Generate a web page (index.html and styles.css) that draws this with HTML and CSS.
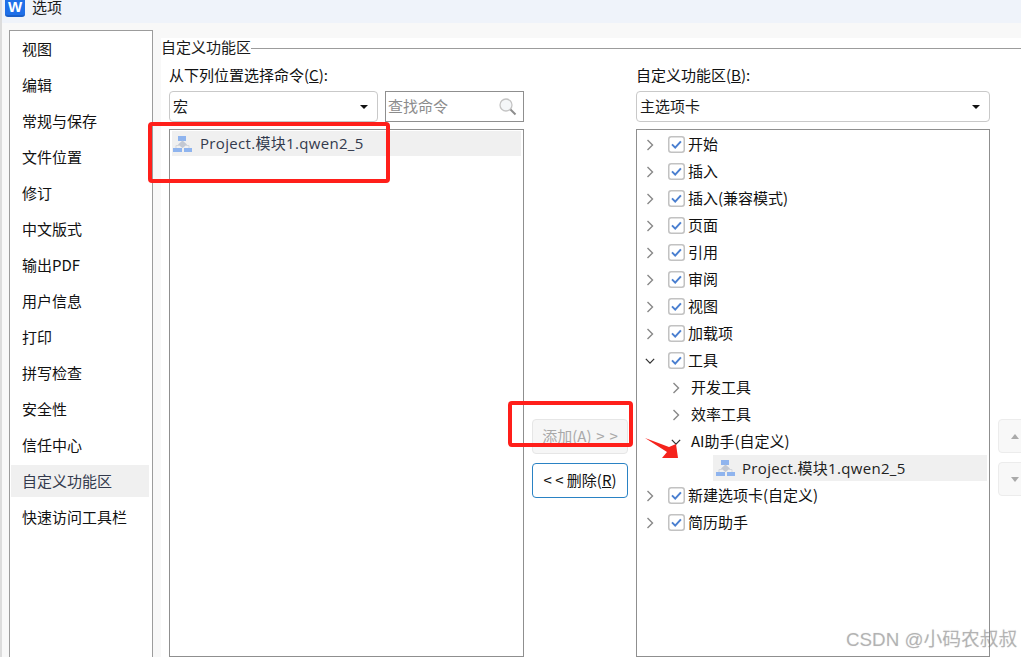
FILE: index.html
```html
<!DOCTYPE html>
<html lang="zh">
<head>
<meta charset="utf-8">
<title>选项</title>
<link rel="stylesheet" href="styles.css">
</head>
<body>
<svg width="0" height="0" class="defs">
  <symbol id="macro" viewBox="0 0 20 16">
    <rect x="5" y="0" width="8" height="5" fill="#8fb4ee"/>
    <rect x="0" y="12" width="9" height="4" fill="#8fb4ee"/>
    <rect x="11" y="12" width="8" height="4" fill="#8fb4ee"/>
    <path d="M9.5 4.5 14 8.5 9.5 12 5 8.5Z" fill="#c3c8d2"/>
    <path d="M3 12V9.5H6M16 12V9.5H13" fill="none" stroke="#d3d6dc" stroke-width="1"/>
  </symbol>
  <symbol id="check" viewBox="0 0 17 17">
    <rect x=".75" y=".75" width="15.5" height="15.5" rx="2.5" fill="#fff" stroke="#c2c2c2" stroke-width="1.5"/>
    <path d="M4 8.4 7.2 11.6 12.9 5.4" fill="none" stroke="#4a7fd0" stroke-width="2"/>
  </symbol>
  <symbol id="right" viewBox="0 0 10 12">
    <path d="M2.5 1 7.5 6 2.5 11" fill="none" stroke="#888" stroke-width="1.4"/>
  </symbol>
  <symbol id="down" viewBox="0 0 12 10">
    <path d="M1 2.5 6 7.5 11 2.5" fill="none" stroke="#333" stroke-width="1.5"/>
  </symbol>
</svg>

<header class="titlebar">
  <span class="app-logo">W</span>
  <span class="app-title">选项</span>
</header>

<div class="dialog">
  <nav class="sidebar">
    <div class="nav-item">视图</div>
    <div class="nav-item">编辑</div>
    <div class="nav-item">常规与保存</div>
    <div class="nav-item">文件位置</div>
    <div class="nav-item">修订</div>
    <div class="nav-item">中文版式</div>
    <div class="nav-item">输出PDF</div>
    <div class="nav-item">用户信息</div>
    <div class="nav-item">打印</div>
    <div class="nav-item">拼写检查</div>
    <div class="nav-item">安全性</div>
    <div class="nav-item">信任中心</div>
    <div class="nav-item selected">自定义功能区</div>
    <div class="nav-item">快速访问工具栏</div>
  </nav>

  <main class="panel">
    <div class="group-title"><span>自定义功能区</span><i class="rule"></i></div>
    <div class="columns">
      <section class="col col-left">
        <div class="field-label">从下列位置选择命令(<u>C</u>):</div>
        <div class="control-row">
          <div class="select select-left"><span>宏</span><i class="caret"></i></div>
          <div class="search"><span>查找命令</span>
            <svg class="search-icon" viewBox="0 0 18 18" width="18" height="18"><circle cx="7" cy="7" r="6" fill="#f4f6f8" stroke="#c4c4c4" stroke-width="1.3"/><path d="M11.5 11.5 16.5 16.5" stroke="#8d8d8d" stroke-width="2"/></svg>
          </div>
        </div>
        <div class="listbox">
          <div class="list-row"><svg class="macro-icon"><use href="#macro"/></svg><span class="latin">Project.模块1.qwen2_5</span></div>
        </div>
      </section>

      <section class="col-mid">
        <button class="btn disabled">添加(<u>A</u>) &gt; &gt;</button>
        <button class="btn primary">&lt; &lt; 删除(<u>R</u>)</button>
      </section>

      <section class="col col-right">
        <div class="field-label">自定义功能区(<u>B</u>):</div>
        <div class="control-row">
          <div class="select select-right"><span>主选项卡</span><i class="caret"></i></div>
        </div>
        <div class="listbox tree">
          <div class="tree-row"><svg class="chev"><use href="#right"/></svg><svg class="check"><use href="#check"/></svg><span>开始</span></div>
          <div class="tree-row"><svg class="chev"><use href="#right"/></svg><svg class="check"><use href="#check"/></svg><span>插入</span></div>
          <div class="tree-row"><svg class="chev"><use href="#right"/></svg><svg class="check"><use href="#check"/></svg><span>插入(兼容模式)</span></div>
          <div class="tree-row"><svg class="chev"><use href="#right"/></svg><svg class="check"><use href="#check"/></svg><span>页面</span></div>
          <div class="tree-row"><svg class="chev"><use href="#right"/></svg><svg class="check"><use href="#check"/></svg><span>引用</span></div>
          <div class="tree-row"><svg class="chev"><use href="#right"/></svg><svg class="check"><use href="#check"/></svg><span>审阅</span></div>
          <div class="tree-row"><svg class="chev"><use href="#right"/></svg><svg class="check"><use href="#check"/></svg><span>视图</span></div>
          <div class="tree-row"><svg class="chev"><use href="#right"/></svg><svg class="check"><use href="#check"/></svg><span>加载项</span></div>
          <div class="tree-row"><svg class="chev chev-down"><use href="#down"/></svg><svg class="check"><use href="#check"/></svg><span>工具</span></div>
          <div class="tree-row level2"><svg class="chev"><use href="#right"/></svg><span>开发工具</span></div>
          <div class="tree-row level2"><svg class="chev"><use href="#right"/></svg><span>效率工具</span></div>
          <div class="tree-row level2"><svg class="chev chev-down"><use href="#down"/></svg><span>AI助手(自定义)</span></div>
          <div class="tree-row level3"><svg class="macro-icon"><use href="#macro"/></svg><span class="latin">Project.模块1.qwen2_5</span></div>
          <div class="tree-row"><svg class="chev"><use href="#right"/></svg><svg class="check"><use href="#check"/></svg><span>新建选项卡(自定义)</span></div>
          <div class="tree-row"><svg class="chev"><use href="#right"/></svg><svg class="check"><use href="#check"/></svg><span>简历助手</span></div>
        </div>
      </section>

      <section class="col-move">
        <button class="move-btn"><i class="tri up"></i></button>
        <button class="move-btn"><i class="tri dn"></i></button>
      </section>
    </div>
  </main>
</div>

<div class="mark mark-list"></div>
<div class="mark mark-add"></div>
<svg class="mark-arrow" width="40" height="26" viewBox="0 0 40 26"><path d="M0 1 24 10 31 7 33 21 17 21 22 15Z" fill="#f5231c"/></svg>
<div class="watermark">CSDN @小码农叔叔</div>
</body>
</html>
```
FILE: styles.css
```css
* { box-sizing: border-box; }
html, body { margin: 0; height: 100%; }
body {
  width: 1021px;
  height: 657px;
  overflow: hidden;
  position: relative;
  background: #f8f8f8;
  font-family: "Noto Sans CJK SC", "Noto Sans", sans-serif;
  font-size: 15px;
  color: #1a1a1a;
  border-left: 2px solid #dcdcdc;
}
.defs { position: absolute; }

.titlebar {
  height: 23px;
  background: #eff3fa;
  display: flex;
  align-items: flex-start;
  gap: 7px;
  padding-left: 3px;
}
.app-logo {
  width: 20px;
  height: 17px;
  background: #1e6fe8;
  border-bottom: 2px solid #1a5fc9;
  border-radius: 0 0 3px 3px;
  color: #fff;
  font: bold 15px/13px "Liberation Sans", sans-serif;
  text-align: center;
}
.app-title { font-size: 15px; line-height: 13px; }

.dialog {
  display: flex;
  height: 634px;
  padding: 7px 0 0 7px;
  background: #f8f8f8;
}
.sidebar {
  width: 144px;
  flex: none;
  background: #fff;
  border: 1px solid #9c9c9c;
  border-bottom: 0;
  padding: 1px 3px 0 1px;
}
.nav-item {
  height: 36px;
  line-height: 33px;
  padding-left: 11px;
  color: #111;
}
.nav-item.selected { background: #f0f0f0; color: #333a4d; line-height: 31px; height: 32px; margin: 1px 0 3px; }

.panel {
  flex: 1;
  min-width: 0;
  margin: 8px 0 0 8px;
  background: #fff;
}
.group-title {
  display: flex;
  align-items: center;
  height: 20px;
  line-height: 18px;
  gap: 0;
}
.group-title span { padding-bottom: 2px; line-height: 18px; }
.rule { flex: 1; height: 1px; background: #9c9c9c; }

.columns { display: flex; padding: 0 0 0 8px; }
.col { display: flex; flex-direction: column; flex: none; }
.col-left { width: 355px; }
.col-right { width: 354px; }
.field-label { height: 33px; line-height: 34px; color: #111; }
.control-row { display: flex; gap: 7px; height: 31px; }

.select {
  display: flex;
  align-items: center;
  justify-content: space-between;
  height: 31px;
  line-height: 27px;
  padding: 0 9px 0 3px;
  border: 1px solid #c9c9c9;
  border-radius: 4px;
  background: #fff;
}
.select span, .search span { padding-bottom: 2px; }
.select-left { width: 209px; }
.select-right { width: 354px; }
.caret {
  width: 0;
  height: 0;
  border-left: 4px solid transparent;
  border-right: 4px solid transparent;
  border-top: 4px solid #111;
}
.search {
  width: 139px;
  height: 31px;
  line-height: 27px;
  border: 1px solid #8f8f8f;
  display: flex;
  align-items: center;
  justify-content: space-between;
  padding: 0 6px 0 2px;
  color: #8c8c8c;
}
.listbox {
  height: 528px;
  margin-top: 7px;
  border: 1px solid #8f8f8f;
  padding: 1px 2px;
  background: #fff;
}
.list-row {
  display: flex;
  align-items: center;
  height: 25px;
  line-height: 23px;
  gap: 7px;
  padding-left: 1px;
  background: #f0f0f0;
  color: #333a4d;
}
.macro-icon { width: 20px; height: 16px; flex: none; }
.latin { font-family: "Open Sans", "Noto Sans CJK SC", sans-serif; font-size: 15px; letter-spacing: .32px; }

.col-mid {
  width: 112px;
  flex: none;
  padding: 361px 0 0 8px;
  display: flex;
  flex-direction: column;
  gap: 9px;
}
.btn {
  width: 96px;
  height: 35px;
  border-radius: 4px;
  font: inherit;
  line-height: 30px;
  padding: 0 0 2px;
  background: #fff;
}
.btn.disabled { background: #f6f6f6; border: 1px solid #e6e6e6; color: #a9a9a9; word-spacing: 1.5px; }
.btn.primary { border: 1px solid #2a82c4; color: #111; }

.tree-row {
  display: flex;
  align-items: center;
  height: 27px;
  line-height: 23px;
  padding-left: 6px;
  color: #111;
}
.tree-row > span { padding-bottom: 2px; }
.tree-row > span.latin { padding-bottom: 0; }
.chev { width: 10px; height: 12px; flex: none; margin-right: 13px; }
.chev-down { margin-right: 13px; }
.check { width: 17px; height: 17px; flex: none; margin-right: 3px; }
.level2 { padding-left: 32px; }
.level2 .chev { margin-right: 10px; }
.level3 {
  margin-left: 74px;
  padding-left: 3px;
  height: 26px;
  margin-bottom: 1px;
  background: #f0f0f0;
  gap: 6px;
  color: #222;
}

.col-move {
  flex: none;
  width: 40px;
  padding: 361px 0 0 8px;
  display: flex;
  flex-direction: column;
  gap: 9px;
}
.move-btn {
  width: 40px;
  height: 34px;
  flex: none;
  padding: 0 0 0 10px;
  border: 1px solid #ececec;
  border-radius: 4px;
  background: #f8f8f8;
  display: flex;
  align-items: center;
  justify-content: flex-start;
}
.tri { width: 0; height: 0; border-left: 4px solid transparent; border-right: 4px solid transparent; margin-left: 2px; }
.tri.up { border-bottom: 5px solid #aaa; }
.tri.dn { border-top: 5px solid #aaa; }

.mark {
  position: absolute;
  border: 4px solid #ff1f1a;
  border-radius: 4px;
}
.mark-list { left: 146px; top: 122px; width: 242px; height: 61px; }
.mark-add { left: 506px; top: 401px; width: 125px; height: 46px; }
.mark-arrow { position: absolute; left: 643px; top: 437px; }
.watermark {
  position: absolute;
  left: 844px;
  top: 628px;
  font-family: "Liberation Sans", "Noto Sans CJK SC", sans-serif;
  font-size: 18.8px;
  line-height: 24px;
  color: rgba(120, 120, 120, .42);
  text-shadow: 0 0 1px rgba(120,120,120,.3);
  white-space: nowrap;
}
```
